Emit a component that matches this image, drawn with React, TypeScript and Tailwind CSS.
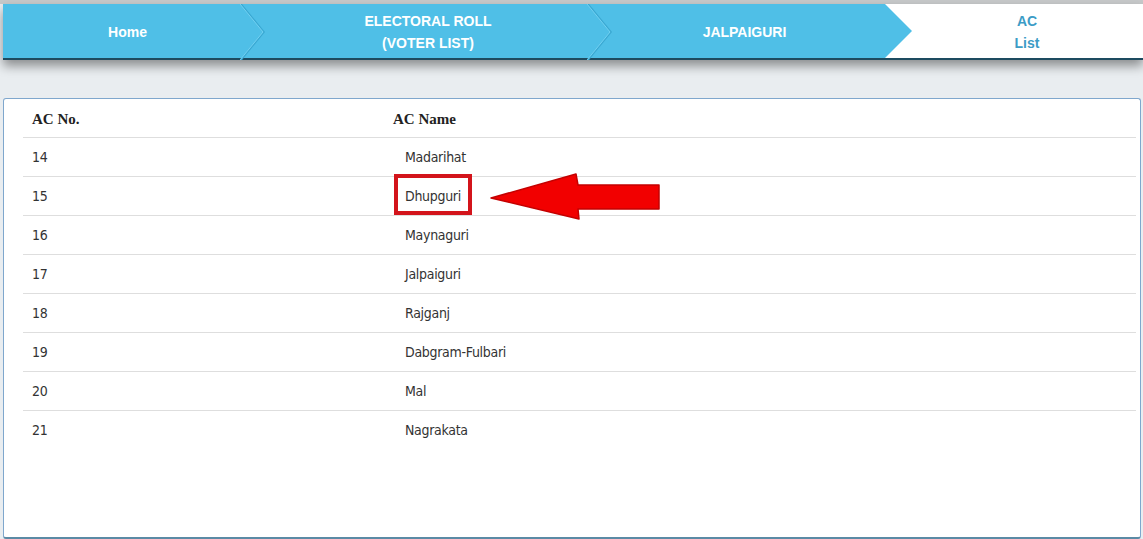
const ROWS = [
  { no: "14", name: "Madarihat" },
  { no: "15", name: "Dhupguri", marked: true },
  { no: "16", name: "Maynaguri" },
  { no: "17", name: "Jalpaiguri" },
  { no: "18", name: "Rajganj" },
  { no: "19", name: "Dabgram-Fulbari" },
  { no: "20", name: "Mal" },
  { no: "21", name: "Nagrakata" },
];

const CRUMB = "font-['Liberation_Sans',Arial,sans-serif] font-bold text-[14px] leading-[22px] text-center pt-[2px]";
const CELL = "font-['Liberation_Sans_Narrow','DejaVu_Sans_Condensed','Roboto_Condensed',Roboto,sans-serif] text-[14px] tracking-[-0.3px] text-[#333]";

function Chevron({ left }: { left: number }) {
  return (
    <svg
      className="absolute top-0 pointer-events-none"
      style={{ left }}
      width="28"
      height="56"
      viewBox="0 0 28 56"
      fill="none"
    >
      <polyline points="1,0 24,28 1,56" stroke="#3aa9d3" strokeWidth="1.6" />
      <polyline points="0,0 23,28 0,56" stroke="#72d0f1" strokeWidth="1" />
    </svg>
  );
}

export default function App() {
  return (
    <div className="w-[1143px] h-[539px] overflow-hidden bg-[#e9edf0] flex flex-col">
      <div className="h-[4px] bg-[#c7c9ca] shrink-0" />
      <nav className="relative ml-[3px] flex h-[56px] shrink-0 border-b-2 border-[#1d4b60] bg-[#4fbfe7] shadow-[0_6px_10px_rgba(0,0,0,0.4)]">
        <div className={`${CRUMB} text-white w-[249px] flex items-center justify-center`}>Home</div>
        <div className={`${CRUMB} text-white w-[352px] flex flex-col items-center justify-center`}>
          <span>ELECTORAL ROLL</span>
          <span>(VOTER LIST)</span>
        </div>
        <div className={`${CRUMB} text-white w-[281px] flex items-center justify-center`}>JALPAIGURI</div>
        <div className={`${CRUMB} text-[#3c9cc6] relative flex-1 bg-white flex flex-col items-center justify-center pl-[26px]`}>
          <div className="absolute left-0 top-0 h-full w-[27px] bg-[#4fbfe7] [clip-path:polygon(0_0,100%_50%,0_100%)]" />
          <span>AC</span>
          <span>List</span>
        </div>
        <Chevron left={237} />
        <Chevron left={584} />
      </nav>

      <div className="mt-[38px] ml-[3px] w-[1138px] flex-1 rounded-[3px] border border-b-2 border-[#7fa7cd] border-b-[#5b8aa5] bg-white pl-[19px] pr-[4px] pt-[1px]">
        <div className="relative">
          <div className="flex h-[38px] items-center pt-[2px] border-b border-[#dedede] font-['Liberation_Serif','Times_New_Roman',serif] font-bold text-[15px] text-[#222]">
            <div className="w-[361px] pl-[9px]">AC No.</div>
            <div className="pl-[9px]">AC Name</div>
          </div>
          {ROWS.map((r, i) => (
            <div
              key={r.no}
              className={`flex h-[39px] items-center ${i < ROWS.length - 1 ? "border-b border-[#dedede]" : ""} ${CELL}`}
            >
              <div className="w-[361px] pl-[9px]">{r.no}</div>
              <div className="relative pl-[21px]">
                {r.marked && (
                  <div className="absolute left-[10px] top-[-12px] h-[41px] w-[78px] border-[4px] border-[#d3141b]" />
                )}
                {r.name}
              </div>
            </div>
          ))}

          <svg
            className="absolute left-[466px] top-[72px] pointer-events-none"
            width="172"
            height="48"
            viewBox="0 0 172 48"
          >
            <polygon
              points="2,26 87,2 89,13 170,13 170,37 89,37 90,47"
              fill="#f20000"
              stroke="#c40000"
              strokeWidth="1.5"
              strokeLinejoin="round"
            />
          </svg>
        </div>
      </div>
    </div>
  );
}
